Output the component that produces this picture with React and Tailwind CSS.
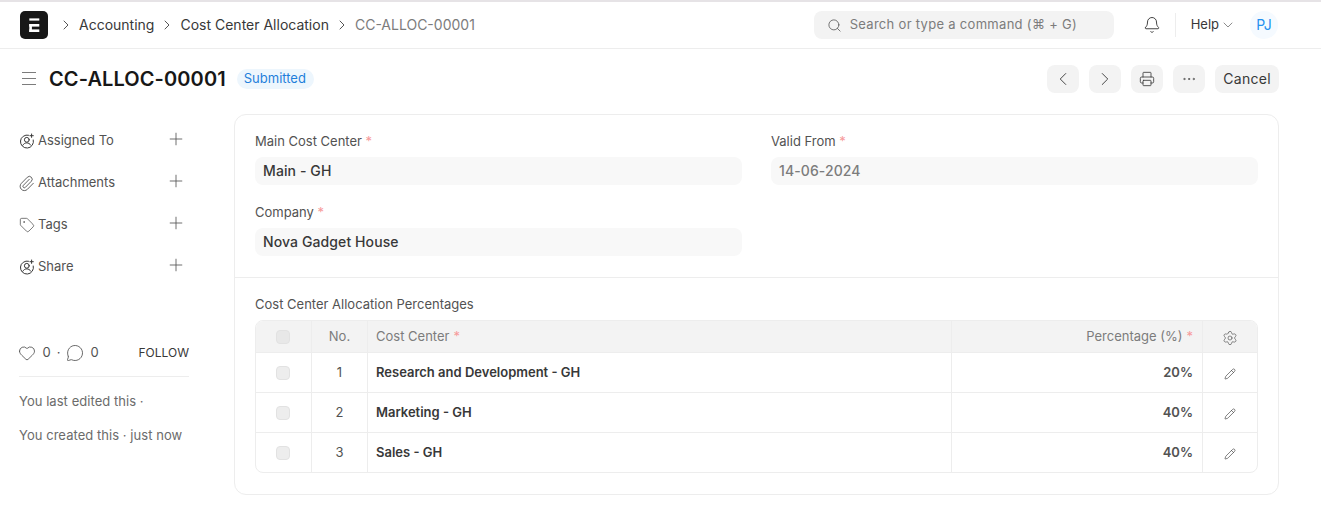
import { Bell, ChevronDown, ChevronLeft, ChevronRight, Ellipsis, Heart, MessageCircle, Paperclip, Pencil, Plus, Printer, Search, Settings, Tag } from 'lucide-react';

function UserAdd() {
    return (
        <svg width="16" height="16" viewBox="0 0 16 16" fill="none" stroke="#383838" strokeWidth="1" strokeLinecap="round" className="shrink-0">
            <path d="M9.5 2.2A6.5 6.5 0 1 0 14.3 7" />
            <circle cx="7.8" cy="6.8" r="2.4" />
            <path d="M3.8 12.2c1-1.6 2.4-2.3 4-2.3s3 .7 4 2.3" />
            <path d="M12.6 1v3.4M10.9 2.7h3.4" />
        </svg>
    );
}

function Crumb({ children }) {
    return (
        <div className="flex items-center">
            <ChevronRight size={16} strokeWidth={1.25} className="text-[#333] mr-[5px]" />
            <span className="text-[#383838] mr-[5px]">{children}</span>
        </div>
    );
}

function SideRow({ icon, label }) {
    return (
        <div className="flex items-center h-[42px] text-[13px] text-[#525252]">
            <div className="w-[19px] flex items-center">{icon}</div>
            <span>{label}</span>
            <Plus size={20} strokeWidth={1} className="ml-auto mr-[3px] -mt-[4px] text-[#525252]" />
        </div>
    );
}

function IconBtn({ children }) {
    return <button className="w-[32px] h-[28px] bg-[#f3f3f3] rounded-lg flex items-center justify-center text-[#383838]">{children}</button>;
}

function Field({ label, value, muted }) {
    return (
        <div>
            <div className="text-[13px] leading-4 text-[#525252] mb-2">
                {label} <span className="text-[#f79a9a]">*</span>
            </div>
            <div className={`h-7 bg-[#f8f8f8] rounded-lg px-2 flex items-center text-sm font-medium tracking-[0.1px] ${muted ? 'text-[#7c7c7c]' : 'text-[#383838]'}`}>
                {value}
            </div>
        </div>
    );
}

const rows = [
    { no: 1, name: 'Research and Development - GH', pct: '20%' },
    { no: 2, name: 'Marketing - GH', pct: '40%' },
    { no: 3, name: 'Sales - GH', pct: '40%' },
];

export default function App() {
    return (
        <div className="w-[1321px] h-[516px] overflow-hidden bg-white font-['Inter',sans-serif] text-[#171717]">
            <div className="h-[2px] bg-[#e6e3e6]"></div>
            <header className="h-[47px] border-b border-[#ededed] pl-5 pr-[43px] flex items-center">
                <div className="w-7 h-7 rounded-[5px] bg-[#171717] flex items-center justify-center">
                    <svg width="12" height="14" viewBox="0 0 12 14" fill="white">
                        <rect x="1.3" y="0.4" width="10" height="2.2" />
                        <rect x="1.3" y="6" width="10" height="2.6" />
                        <rect x="1.3" y="6" width="2.6" height="8" />
                        <rect x="1.3" y="11.4" width="10" height="2.6" />
                    </svg>
                </div>
                <div className="flex items-center ml-[10px] text-sm">
                    <Crumb>Accounting</Crumb>
                    <Crumb>Cost Center Allocation</Crumb>
                    <ChevronRight size={16} strokeWidth={1.25} className="text-[#333] mr-[5px]" />
                    <span className="text-[#7c7c7c]">CC-ALLOC-00001</span>
                </div>
                <div className="ml-auto w-[300px] h-7 bg-[#f3f3f3] rounded-lg flex items-center pl-[13px] text-[13px] text-[#7c7c7c] tracking-[0.3px]">
                    <Search size={15} strokeWidth={1.25} className="mr-[8px] text-[#525252]" />
                    <span>Search or type a command (⌘ + G)</span>
                </div>
                <Bell size={18} strokeWidth={1.25} className="ml-[29px] text-[#383838]" />
                <div className="w-px h-6 bg-[#ededed] ml-[14px]"></div>
                <span className="ml-[15px] text-[13px] text-[#383838]">Help</span>
                <ChevronDown size={16} strokeWidth={1} className="ml-px text-[#525252]" />
                <div className="ml-[14px] w-7 h-7 rounded-full bg-[#f5faff] text-[#2490ef] text-sm flex items-center justify-center">PJ</div>
            </header>

            <div className="h-[65px] pb-[6px] pl-[22px] pr-[42px] flex items-center">
                <div className="w-[14px] flex flex-col gap-[5px]">
                    <div className="h-px bg-[#7c7c7c]"></div>
                    <div className="h-px bg-[#7c7c7c]"></div>
                    <div className="h-px bg-[#7c7c7c]"></div>
                </div>
                <h1 className="ml-[13px] text-[20px] font-semibold leading-none tracking-[0.1px] text-[#171717]">CC-ALLOC-00001</h1>
                <span className="ml-[11px] h-5 pl-[7px] pr-2 pt-px rounded-full bg-[#edf6fd] text-[#1f7fdb] text-[13px] flex items-center">Submitted</span>
                <div className="ml-auto flex gap-[10px]">
                    <IconBtn><ChevronLeft size={22} strokeWidth={1} /></IconBtn>
                    <IconBtn><ChevronRight size={22} strokeWidth={1} /></IconBtn>
                    <IconBtn><Printer size={16} strokeWidth={1.25} /></IconBtn>
                    <IconBtn><Ellipsis size={16} strokeWidth={1} /></IconBtn>
                    <button className="h-7 px-2 bg-[#f3f3f3] rounded-lg text-sm text-[#383838] tracking-[0.3px]">Cancel</button>
                </div>
            </div>

            <div className="flex pl-[19px] pr-[42px]">
                <aside className="w-[170px] shrink-0 pt-[6px]">
                    <SideRow label="Assigned To" icon={<UserAdd />} />
                    <SideRow label="Attachments" icon={<Paperclip size={17} strokeWidth={1.1} className="text-[#383838] -ml-px" />} />
                    <SideRow label="Tags" icon={<Tag size={16} strokeWidth={1} className="text-[#383838]" />} />
                    <SideRow label="Share" icon={<UserAdd />} />
                    <div className="mt-[53px] h-6 flex items-center text-[13px] text-[#525252]">
                        <Heart size={18} strokeWidth={1} className="text-[#383838] -ml-[1.5px]" />
                        <span className="ml-[7px]">0</span>
                        <span className="mx-[6px]">·</span>
                        <MessageCircle size={18} strokeWidth={1} className="text-[#383838]" />
                        <span className="ml-[6px]">0</span>
                        <span className="ml-auto text-xs text-[#383838]">FOLLOW</span>
                    </div>
                    <div className="h-px bg-[#ededed] mt-[11px]"></div>
                    <div className="mt-[16px] text-[13px] leading-4 text-[#6b6b6b] tracking-[0.05px]">You last edited this ·</div>
                    <div className="mt-[18px] text-[13px] leading-4 text-[#6b6b6b] tracking-[0.05px]">You created this · just now</div>
                </aside>

                <main className="ml-[45px] flex-1 h-[381px] border border-[#ededed] rounded-xl">
                    <section className="h-[163px] border-b border-[#ededed] px-5 pt-[18px]">
                        <div className="grid grid-cols-2 gap-x-[29px] gap-y-[19px]">
                            <Field label="Main Cost Center" value="Main - GH" />
                            <Field label="Valid From" value="14-06-2024" muted />
                            <Field label="Company" value="Nova Gadget House" />
                        </div>
                    </section>
                    <section className="px-5 pt-[18px]">
                        <div className="text-[13px] leading-4 text-[#525252] mb-2">Cost Center Allocation Percentages</div>
                        <div className="border border-[#ededed] rounded-lg overflow-hidden text-[13px]">
                            <div className="flex h-[31px] bg-[#f3f3f3] text-[#7c7c7c]">
                                <div className="w-[56px] pr-px flex items-center justify-center border-r border-[#ededed]">
                                    <div className="w-[14px] h-[14px] bg-[#e8e8e8] rounded-[4px] border border-[#e2e2e2]"></div>
                                </div>
                                <div className="w-[56px] flex items-center justify-center border-r border-[#ededed]">No.</div>
                                <div className="w-[584px] flex items-center px-2 border-r border-[#ededed]">
                                    Cost Center <span className="text-[#f79a9a] ml-1">*</span>
                                </div>
                                <div className="w-[251px] flex items-center justify-end pr-[9px] border-r border-[#ededed]">
                                    Percentage (%) <span className="text-[#f79a9a] ml-1">*</span>
                                </div>
                                <div className="flex-1 flex items-center justify-center pt-[2px]">
                                    <Settings size={16} strokeWidth={1} className="text-[#525252]" />
                                </div>
                            </div>
                            {rows.map((row) => (
                                <div key={row.no} className="flex h-[40px] border-t border-[#ededed] text-[#383838]">
                                    <div className="w-[56px] pr-px flex items-center justify-center border-r border-[#ededed]">
                                        <div className="w-[14px] h-[14px] bg-[#ededed] rounded-[4px] border border-[#e2e2e2]"></div>
                                    </div>
                                    <div className="w-[56px] flex items-center justify-center border-r border-[#ededed] text-[#525252]">{row.no}</div>
                                    <div className="w-[584px] flex items-center px-2 border-r border-[#ededed] font-semibold">{row.name}</div>
                                    <div className="w-[251px] flex items-center justify-end pr-[9px] border-r border-[#ededed] font-semibold text-[#525252]">{row.pct}</div>
                                    <div className="flex-1 flex items-center justify-center pt-[3px]">
                                        <Pencil size={12} strokeWidth={1.25} className="text-[#383838]" />
                                    </div>
                                </div>
                            ))}
                        </div>
                    </section>
                </main>
            </div>
        </div>
    );
}
